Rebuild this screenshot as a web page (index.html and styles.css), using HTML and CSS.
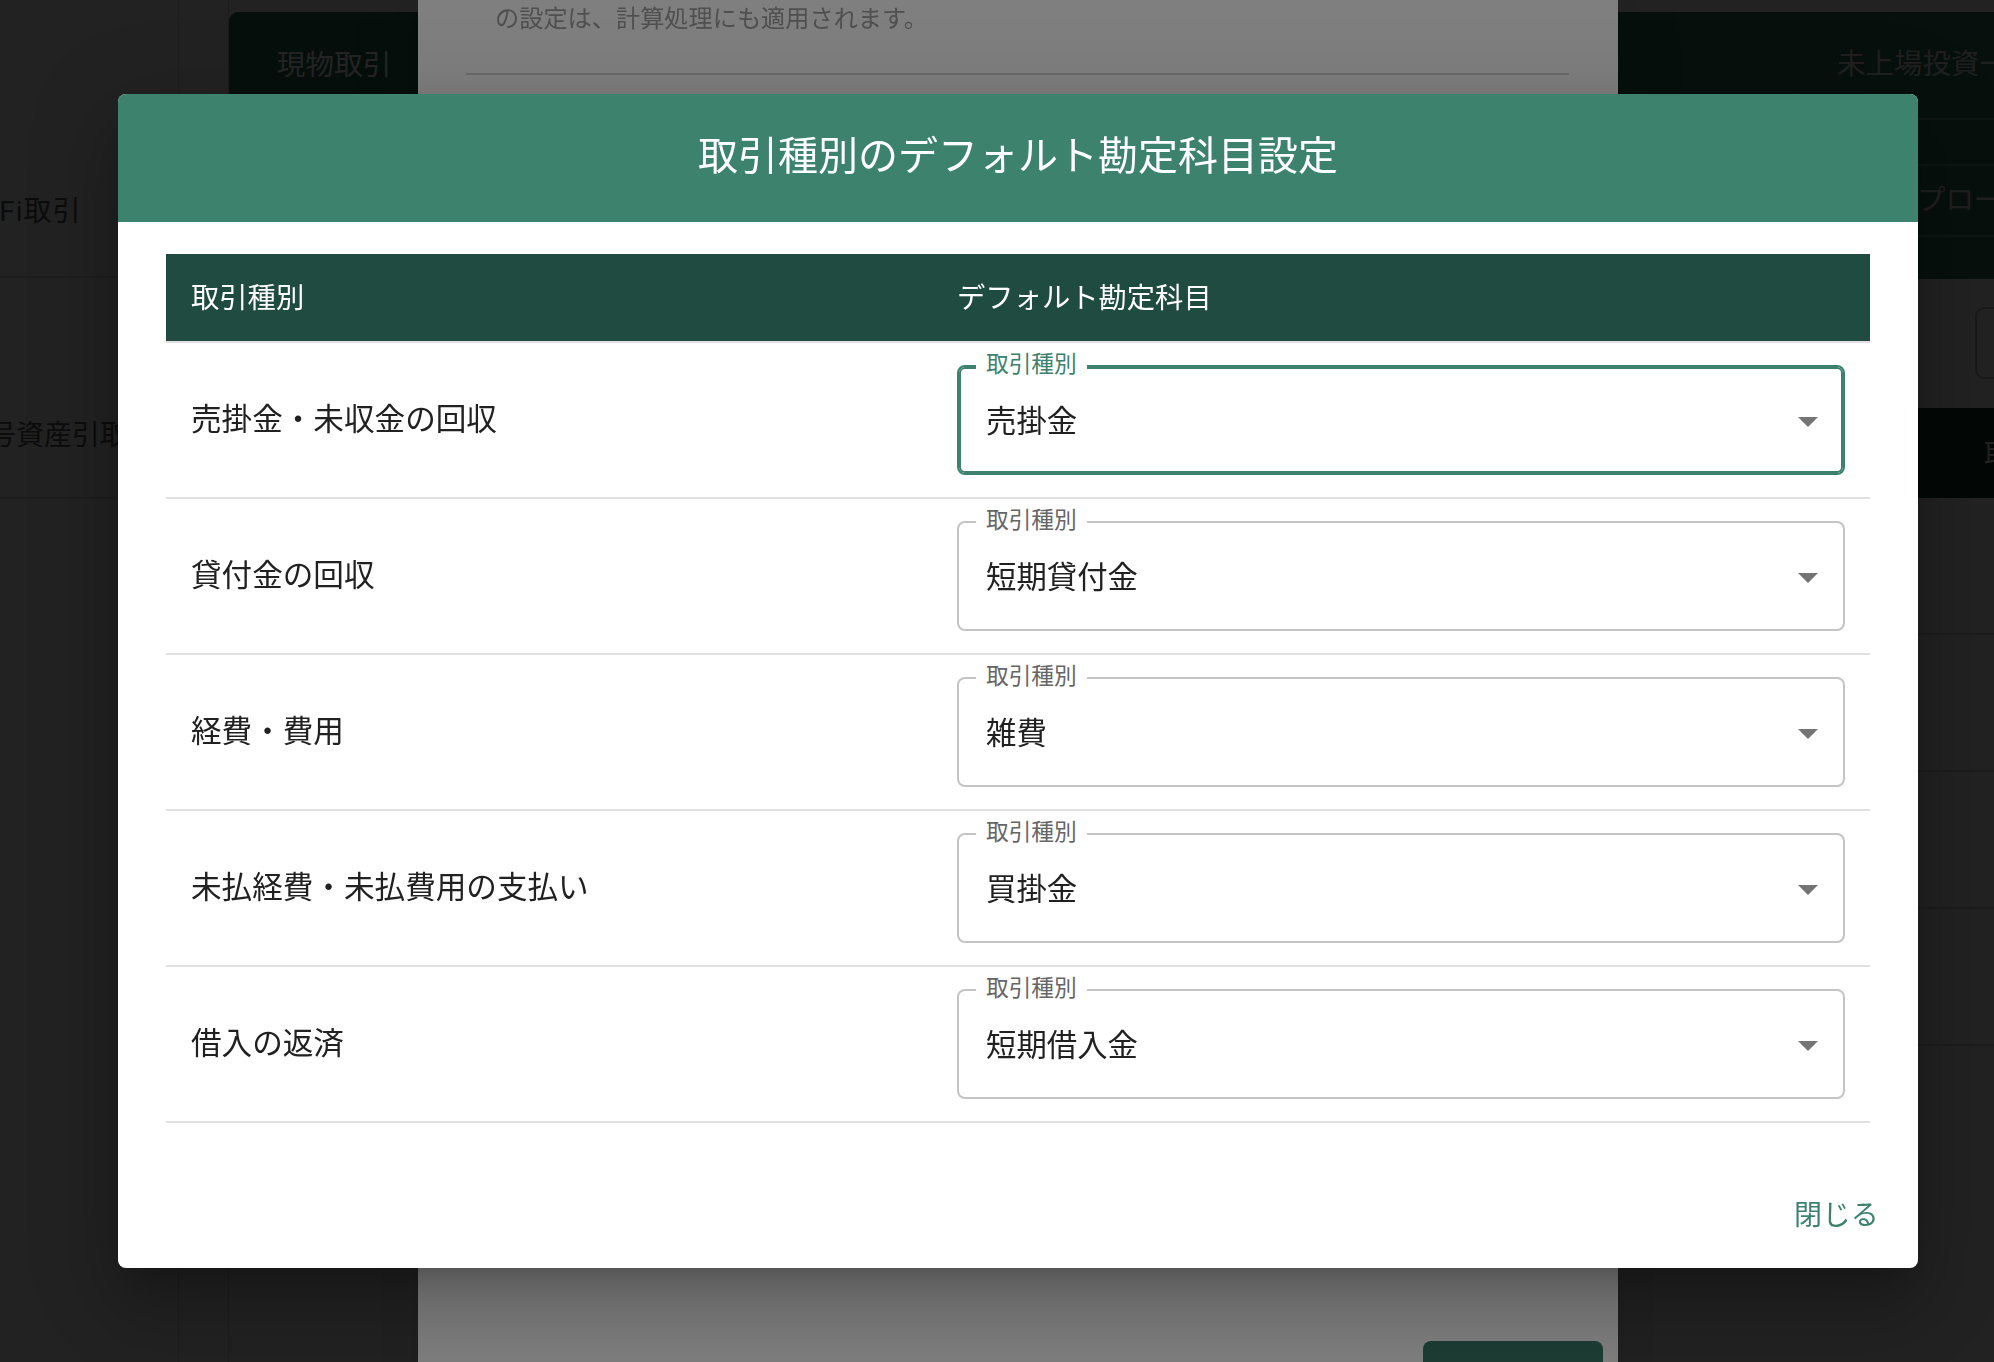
FILE: index.html
```html
<!DOCTYPE html>
<html lang="ja">
<head>
<meta charset="utf-8">
<title>取引種別のデフォルト勘定科目設定</title>
<link rel="stylesheet" href="styles.css">
</head>
<body>
<div class="page">
  <aside class="side">
    <div class="side-item side-item-a"><span class="side-text side-text-a">DeFi取引</span></div>
    <div class="side-item side-item-b"><span class="side-text side-text-b">暗号資産引取引</span></div>
  </aside>
  <div class="gutter"></div>
  <main class="main">
    <nav class="tabbar">
      <div class="tab">現物取引</div>
      <div class="tab-spacer"></div>
      <div class="tab tab-last">未上場投資一覧</div>
    </nav>
    <div class="below">
      <div class="rightcol">
        <div class="menu">
          <div class="menu-item menu-item-a"></div>
          <div class="menu-item menu-item-b"><span class="menu-text">プロー</span></div>
          <div class="menu-item menu-item-c"></div>
        </div>
        <div class="filter"><div class="filter-box"></div></div>
        <div class="greenbar"><span class="greenbar-text">取引一覧</span></div>
        <div class="bg-row"></div>
        <div class="bg-row"></div>
        <div class="bg-row"></div>
        <div class="bg-row"></div>
      </div>
    </div>
  </main>
</div>

<div class="backdrop"></div>

<section class="dialog1">
  <p class="d1-note">の設定は、計算処理にも適用されます。</p>
  <hr class="d1-divider">
  <div class="d1-actions"><div class="d1-button"></div></div>
</section>

<div class="backdrop"></div>

<section class="dialog2" role="dialog">
  <header class="d2-header">取引種別のデフォルト勘定科目設定</header>
  <div class="d2-body">
    <table class="acct-table">
      <colgroup><col class="col-a"><col class="col-b"></colgroup>
      <thead>
        <tr><th>取引種別</th><th>デフォルト勘定科目</th></tr>
      </thead>
      <tbody>
        <tr>
          <td class="kind">売掛金・未収金の回収</td>
          <td>
            <div class="select select-focused">
              <span class="select-label">取引種別</span>
              <span class="select-value">売掛金</span>
              <svg class="select-arrow" viewBox="0 0 20 10" width="20" height="10"><path d="M0 0 L10 10 L20 0 Z"/></svg>
            </div>
          </td>
        </tr>
        <tr>
          <td class="kind">貸付金の回収</td>
          <td>
            <div class="select">
              <span class="select-label">取引種別</span>
              <span class="select-value">短期貸付金</span>
              <svg class="select-arrow" viewBox="0 0 20 10" width="20" height="10"><path d="M0 0 L10 10 L20 0 Z"/></svg>
            </div>
          </td>
        </tr>
        <tr>
          <td class="kind">経費・費用</td>
          <td>
            <div class="select">
              <span class="select-label">取引種別</span>
              <span class="select-value">雑費</span>
              <svg class="select-arrow" viewBox="0 0 20 10" width="20" height="10"><path d="M0 0 L10 10 L20 0 Z"/></svg>
            </div>
          </td>
        </tr>
        <tr>
          <td class="kind">未払経費・未払費用の支払い</td>
          <td>
            <div class="select">
              <span class="select-label">取引種別</span>
              <span class="select-value">買掛金</span>
              <svg class="select-arrow" viewBox="0 0 20 10" width="20" height="10"><path d="M0 0 L10 10 L20 0 Z"/></svg>
            </div>
          </td>
        </tr>
        <tr>
          <td class="kind">借入の返済</td>
          <td>
            <div class="select">
              <span class="select-label">取引種別</span>
              <span class="select-value">短期借入金</span>
              <svg class="select-arrow" viewBox="0 0 20 10" width="20" height="10"><path d="M0 0 L10 10 L20 0 Z"/></svg>
            </div>
          </td>
        </tr>
      </tbody>
    </table>
  </div>
  <footer class="d2-actions">
    <button class="close-btn" type="button">閉じる</button>
  </footer>
</section>
</body>
</html>
```

FILE: styles.css
```css
* { box-sizing: border-box; }

html, body {
  margin: 0;
  padding: 0;
  width: 1994px;
  height: 1362px;
  overflow: hidden;
  font-family: Roboto, "Noto Sans CJK JP", "Noto Sans", sans-serif;
}

/* ---------- background page (already dimmed by an earlier backdrop) ---------- */
.page {
  display: flex;
  width: 1994px;
  height: 1362px;
  background: #8a8a8a;
  overflow: hidden;
}

.side {
  width: 179px;
  flex-shrink: 0;
  border-right: 1px solid #767676;
  padding-top: 12px;
}

.side-item {
  display: flex;
  align-items: flex-end;
  border-bottom: 2px solid #747474;
  white-space: nowrap;
}

.side-item-a { height: 266px; padding-bottom: 44px; }
.side-item-b { height: 221px; padding-bottom: 41px; }

.side-text {
  font-size: 28px;
  line-height: 40px;
  color: #303030;
}

.side-text-a { margin-left: -36px; letter-spacing: 1px; }
.side-text-b { margin-left: -40px; }

.gutter {
  width: 50px;
  flex-shrink: 0;
  border-right: 1px solid #767676;
}

.main {
  flex: 1;
  min-width: 0;
  padding-top: 12px;
  display: flex;
  flex-direction: column;
}

.tabbar {
  height: 106px;
  display: flex;
  align-items: center;
  background: linear-gradient(90deg, #1c3d34, #204238);
  border-top-left-radius: 9px;
  overflow: hidden;
}

.tab {
  width: 210px;
  text-align: center;
  font-size: 28.8px;
  line-height: 40px;
  color: #929292;
  white-space: nowrap;
}

.tab-spacer { flex: 1; }

.tab-last {
  width: 157px;
  text-align: left;
  overflow: hidden;
  font-size: 28.5px;
  color: #7e7e7e;
}

.below {
  display: flex;
  justify-content: flex-end;
}

.rightcol {
  width: 376px;
  display: flex;
  flex-direction: column;
}

.menu {
  background: linear-gradient(90deg, #1a3a31, #204238);
}

.menu-item {
  border-top: 2px solid #3a5a50;
  display: flex;
  align-items: center;
  white-space: nowrap;
  overflow: hidden;
}

.menu-item-a { height: 46px; }
.menu-item-b { height: 71px; padding-left: 299px; padding-bottom: 6px; }
.menu-item-c { height: 44px; }

.menu-text {
  font-size: 28.5px;
  color: #7e7e7e;
}

.filter {
  height: 129px;
  padding: 28px 0 0 357px;
  background: #8a8a8a;
}

.filter-box {
  width: 60px;
  height: 72px;
  border: 2px solid #666666;
  border-radius: 9px;
}

.greenbar {
  height: 90px;
  background: #0e231d;
  display: flex;
  align-items: center;
  padding-left: 366px;
  white-space: nowrap;
  overflow: hidden;
}

.greenbar-text {
  font-family: "Liberation Serif", "Noto Sans CJK JP", serif;
  font-size: 28px;
  color: #888888;
}

.bg-row {
  height: 137px;
  border-bottom: 2px solid #727272;
  background: #888888;
}

.bg-row:first-child { height: 138px; }

/* ---------- backdrops ---------- */
.backdrop {
  position: fixed;
  inset: 0;
  background: rgba(0, 0, 0, 0.5);
}

/* ---------- underlying dialog ---------- */
.dialog1 {
  position: absolute;
  left: 418px;
  top: -40px;
  width: 1200px;
  height: 1462px;
  background: #ffffff;
  border-radius: 8px;
  display: flex;
  flex-direction: column;
  padding: 41px 0 0 0;
  box-shadow: 0 21px 28px -13px rgba(0,0,0,.14), 0 46px 72px 6px rgba(0,0,0,.08);
}

.d1-note {
  margin: 0;
  padding-left: 77px;
  font-size: 24.2px;
  line-height: 36px;
  color: #a0a0a0;
}

.d1-divider {
  margin: 36px 49px 0 48px;
  border: none;
  border-top: 2px solid #d4d4d4;
}

.d1-actions {
  margin-top: auto;
  display: flex;
  justify-content: flex-end;
  padding: 0 15px 9px 0;
}

.d1-button {
  width: 180px;
  height: 72px;
  border-radius: 8px;
  background: #3a7b68;
}

/* ---------- active dialog ---------- */
.dialog2 {
  position: absolute;
  left: 118px;
  top: 94px;
  width: 1800px;
  height: 1174px;
  background: #ffffff;
  border-radius: 8px;
  overflow: hidden;
  display: flex;
  flex-direction: column;
  box-shadow: 0 21px 28px -13px rgba(0,0,0,.2), 0 46px 72px 6px rgba(0,0,0,.14), 0 17px 87px 15px rgba(0,0,0,.12);
}

.d2-header {
  height: 128px;
  flex-shrink: 0;
  background: #3c826d;
  color: #ffffff;
  display: flex;
  align-items: center;
  justify-content: center;
  font-size: 40px;
  font-weight: 400;
  padding-bottom: 11px;
}

.d2-body {
  padding: 32px 48px 0 48px;
}

.acct-table {
  width: 1704px;
  border-collapse: collapse;
  table-layout: fixed;
}

.col-a { width: 766px; }
.col-b { width: 938px; }

.acct-table th {
  height: 88px;
  padding: 0 25px 5px 25px;
  background: #1f4b41;
  color: #ffffff;
  font-size: 28.3px;
  font-weight: 400;
  text-align: left;
  border-bottom: 2px solid #e0e0e0;
}

.acct-table td {
  padding: 22px 25px 22px 25px;
  font-size: 30.6px;
  color: #212121;
  border-bottom: 2px solid #e0e0e0;
  vertical-align: middle;
}

.acct-table td.kind {
  padding-top: 19px;
  padding-bottom: 25px;
}

.select {
  position: relative;
  height: 110px;
  border: 2px solid #c4c4c4;
  border-radius: 8px;
  display: flex;
  align-items: center;
  padding-left: 27px;
}

.select-focused {
  border-color: #3c826d;
  box-shadow: inset 0 0 0 2px #3c826d;
}

.select-label {
  position: absolute;
  left: 17px;
  top: -19px;
  padding: 0 10px;
  background: #ffffff;
  font-size: 22.7px;
  line-height: 34px;
  color: #666666;
}

.select-focused .select-label {
  color: #3c826d;
}

.select-value {
  font-size: 30.4px;
  color: #212121;
  padding-bottom: 3px;
}

.select-arrow {
  position: absolute;
  right: 25px;
  top: 50%;
  margin-top: -3px;
  fill: #757575;
}

.d2-actions {
  display: flex;
  justify-content: flex-end;
  padding: 73px 39px 31px 0;
}

.close-btn {
  border: none;
  background: none;
  padding: 0;
  font-family: Roboto, "Noto Sans CJK JP", "Noto Sans", sans-serif;
  font-size: 28px;
  line-height: 40px;
  color: #3c826d;
  letter-spacing: 0.3px;
}
```
